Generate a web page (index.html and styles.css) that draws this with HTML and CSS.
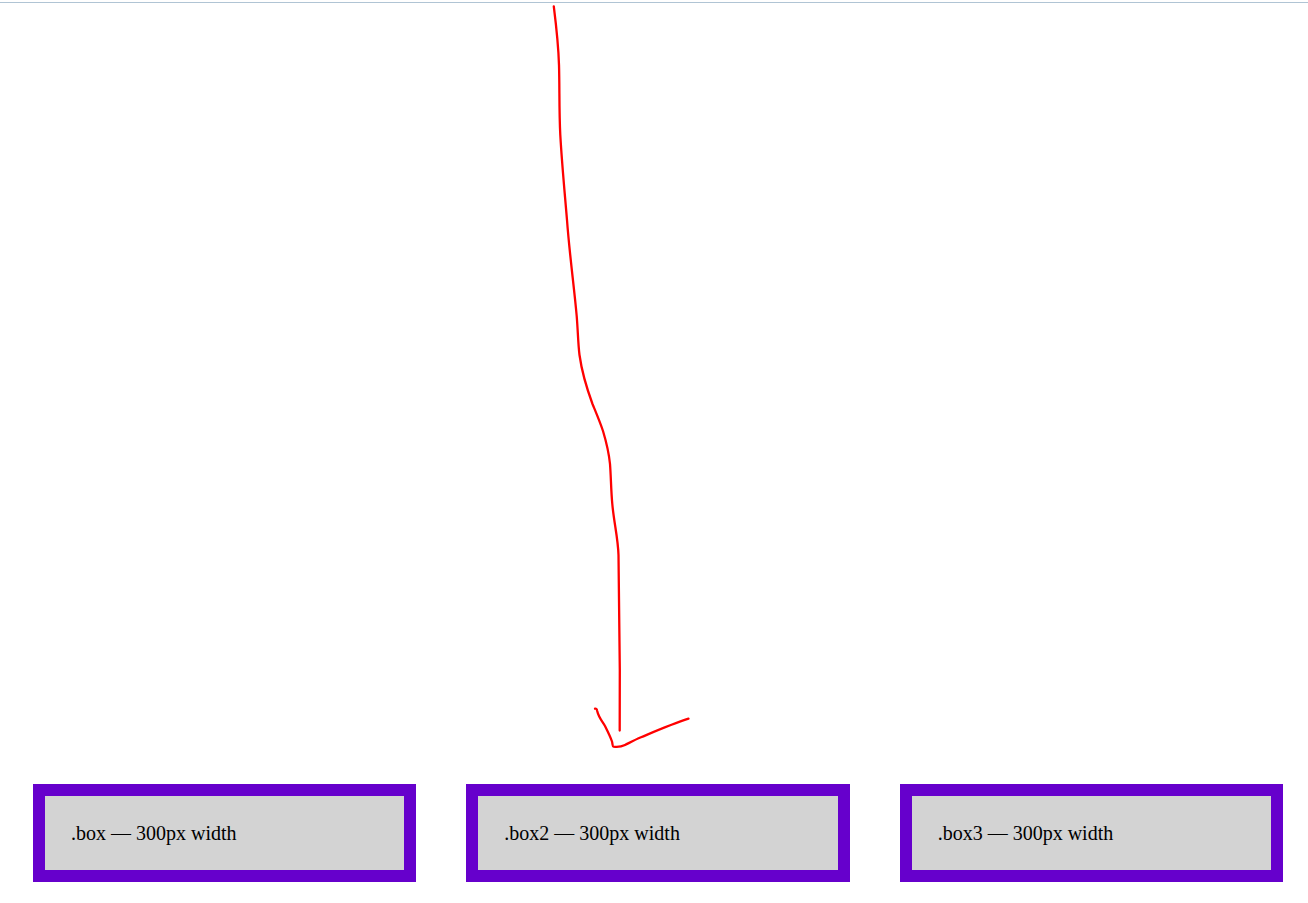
FILE: index.html
```
<!DOCTYPE html>
<html lang="en">
<head>
<meta charset="utf-8">
<title>Boxes</title>
<link rel="stylesheet" href="styles.css">
</head>
<body>
<main class="page">
  <div class="rule"></div>
  <div class="sketch">
    <svg class="arrow" viewBox="0 3 1308 781" role="img" aria-label="Arrow pointing down to the boxes">
      <path d="M553.8 6.5C556 24 558.3 42 559 65C559.7 88 559 110 560.3 135C562 165 564.5 190 567 220C569.5 254 574 286 576.7 316C578 332 578 343 579.5 355C582 373 587 389 592.5 404C597 415 600 422 603 431C606 441 608.8 452 610 464C611 477 611 490 612.3 504C614 523 618 538 618.5 555C619 590 619.6 630 619.8 670L619.7 730.5"/>
      <path d="M595 708.7Q596.7 708.3 597.2 711C598.5 717 602 721 605 726C608 732 610.5 737 612 741.5C612.7 744 612.3 746.5 613.5 746.7C617 747.2 621 747 625 745C630 742.5 635 739.7 641 737.3C656 731 672 724 688.5 718.7"/>
    </svg>
  </div>
  <section class="boxes">
    <div class="box">.box — 300px width</div>
    <div class="box">.box2 — 300px width</div>
    <div class="box">.box3 — 300px width</div>
  </section>
</main>
</body>
</html>
```
FILE: styles.css
```
body {
  margin: 0;
  background: #fff;
  color: #000;
  font-family: "Liberation Serif", "Times New Roman", serif;
  font-size: 20px;
  line-height: 24px;
}

.page {
  display: flex;
  flex-direction: column;
  min-height: 100vh;
}

.rule {
  margin-top: 2px;
  border-top: 1px solid #b0c4d4;
}

.sketch {
  flex: 1;
}

.arrow {
  display: block;
  width: 100%;
  fill: none;
  stroke: #f00;
  stroke-width: 2.3;
  stroke-linecap: round;
  stroke-linejoin: round;
}

.boxes {
  display: flex;
  flex-wrap: wrap;
  gap: 50px;
  padding: 0 25px 21px 33px;
}

.box {
  flex: 1;
  padding: 25px 26px;
  border: 12px solid #60c;
  background: #d3d3d3;
}
```
